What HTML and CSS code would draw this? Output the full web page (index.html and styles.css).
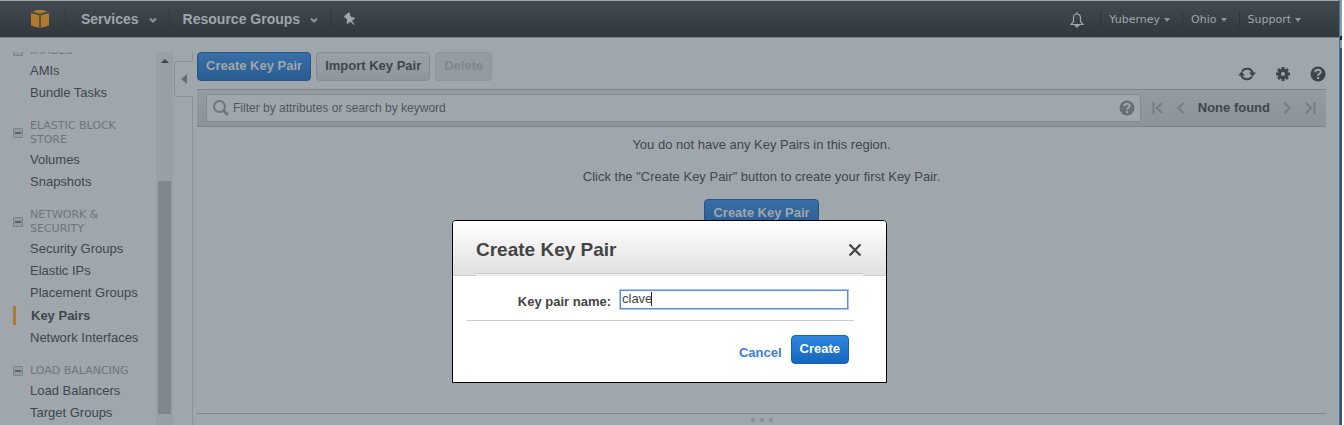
FILE: index.html
```html
<!DOCTYPE html>
<html lang="en">
<head>
<meta charset="utf-8">
<title>Key Pairs</title>
<link rel="stylesheet" href="styles.css">
</head>
<body>
<div class="window">
  <div class="app">
    <header class="topbar">
      <nav class="nav-main">
        <a class="logo" href="#" aria-label="Home">
          <svg width="20" height="20" viewBox="0 0 20 20" fill="#b27a30"><path d="M2.500 2.500 7 1h6l4.500 1.500L10 4.800z"/><path d="M1 4 9.300 6.200V19L1 16.500z"/><path d="M19 4 10.700 6.200V19l8.300-2.500z"/></svg>
        </a>
        <button class="nav-item services" type="button">Services<svg class="chev" width="8" height="6" viewBox="0 0 8 6"><path d="M1 1.500 4 4.500 7 1.500"/></svg></button>
        <button class="nav-item groups" type="button">Resource Groups<svg class="chev" width="8" height="6" viewBox="0 0 8 6"><path d="M1 1.500 4 4.500 7 1.500"/></svg></button>
        <button class="nav-item pin" type="button" aria-label="Pin">
          <svg width="12" height="14" viewBox="0 0 12 14" fill="#a0a6ab"><path d="M3.500 1.200 5.200.500 6 1.500 5.800 3l2 2.500L10 5.300l1 1.200-3 2.200L10.500 12.500 9.800 13 6.500 9.700 3.200 12l-.700-1.200.800-2.100L2 6 .500 5.500 0 4.200z"/></svg>
        </button>
      </nav>
      <nav class="nav-user">
        <button class="user-item bell" type="button" aria-label="Alerts">
          <svg width="14" height="16" viewBox="0 0 14 16" fill="none" stroke="#a0a6ab" stroke-width="1.200"><path d="M7 0v2M1 12.500h12L10.500 9.500V6C10.500 3.500 9 2 7 2S3.500 3.500 3.500 6v3.500z"/><path d="M5.500 13.500h3L7 15z" fill="#a0a6ab"/></svg>
        </button>
        <button class="user-item" type="button">Yuberney<i class="caret"></i></button>
        <button class="user-item" type="button">Ohio<i class="caret"></i></button>
        <button class="user-item" type="button">Support<i class="caret"></i></button>
      </nav>
    </header>

    <div class="body">
      <aside class="sidebar">
        <nav class="menu">
          <section class="group">
            <h2><button class="fold" type="button" aria-label="Collapse"></button><span>IMAGES</span></h2>
            <a href="#">AMIs</a>
            <a href="#">Bundle Tasks</a>
          </section>
          <section class="group">
            <h2><button class="fold" type="button" aria-label="Collapse"></button><span>ELASTIC BLOCK STORE</span></h2>
            <a href="#">Volumes</a>
            <a href="#">Snapshots</a>
          </section>
          <section class="group">
            <h2><button class="fold" type="button" aria-label="Collapse"></button><span>NETWORK &amp; SECURITY</span></h2>
            <a href="#">Security Groups</a>
            <a href="#">Elastic IPs</a>
            <a href="#">Placement Groups</a>
            <a href="#" class="current">Key Pairs</a>
            <a href="#">Network Interfaces</a>
          </section>
          <section class="group">
            <h2><button class="fold" type="button" aria-label="Collapse"></button><span>LOAD BALANCING</span></h2>
            <a href="#">Load Balancers</a>
            <a href="#">Target Groups</a>
          </section>
        </nav>
        <div class="scrollbar"><i class="arrow"></i><div class="thumb"></div></div>
        <div class="divider"><button class="collapse" type="button" aria-label="Collapse panel"><i></i></button></div>
      </aside>

      <main class="content">
        <div class="toolbar">
          <button class="btn primary" type="button">Create Key Pair</button>
          <button class="btn plain" type="button">Import Key Pair</button>
          <button class="btn plain" type="button" disabled>Delete</button>
          <div class="tools">
            <button type="button" aria-label="Refresh"><svg width="18" height="16" viewBox="0 0 18 16"><path d="M4 5.500A6 6 0 0 1 14.800 7M14 10.500A6 6 0 0 1 3.200 9" fill="none" stroke="#3d454c" stroke-width="2"/><path d="M11 6.500h7L14.500 10.500zM0 9.500h7L3.500 5.500z" fill="#3d454c"/></svg></button>
            <button type="button" aria-label="Settings"><svg width="14" height="14" viewBox="0 0 14 14"><g stroke="#3d454c" stroke-width="3"><path d="M7 0v14M0 7h14M2.100 2.100l9.800 9.800M11.900 2.100 2.100 11.900"/></g><circle cx="7" cy="7" r="5" fill="#3d454c"/><circle cx="7" cy="7" r="2" fill="#9fa6ac"/></svg></button>
            <button type="button" aria-label="Help"><svg width="16" height="16" viewBox="0 0 16 16"><circle cx="8" cy="8" r="7.500" fill="#3d454c"/><path d="M5.300 6.200C5.300 3 10.700 3 10.700 6c0 1.800-2.700 1.800-2.700 3.800M8 11v2" fill="none" stroke="#9fa6ac" stroke-width="2"/></svg></button>
          </div>
        </div>
        <div class="filterbar">
          <div class="search">
            <svg width="16" height="16" viewBox="0 0 16 16" fill="none" stroke="#6e767c"><circle cx="6.500" cy="6.500" r="5.500" stroke-width="2"/><path d="m10.500 10.500 4.500 4.500" stroke-width="3"/></svg>
            <input type="text" aria-label="Filter" placeholder="Filter by attributes or search by keyword">
            <svg width="16" height="16" viewBox="0 0 16 16"><circle cx="8" cy="8" r="7.500" fill="#686f75"/><path d="M5.300 6.200C5.300 3 10.700 3 10.700 6c0 1.800-2.700 1.800-2.700 3.800M8 11v2" fill="none" stroke="#9fa6ac" stroke-width="2"/></svg>
          </div>
          <div class="pager">
            <button type="button" aria-label="First"><svg width="12" height="12" viewBox="0 0 12 12"><path d="M1.500 0v12M10 1 5 6l5 5"/></svg></button>
            <button type="button" aria-label="Previous"><svg width="8" height="12" viewBox="0 0 8 12"><path d="M6.500 1l-5 5 5 5"/></svg></button>
            <strong>None found</strong>
            <button type="button" aria-label="Next"><svg width="8" height="12" viewBox="0 0 8 12"><path d="M1.500 1l5 5-5 5"/></svg></button>
            <button type="button" aria-label="Last"><svg width="12" height="12" viewBox="0 0 12 12"><path d="M10.500 0v12M2 1l5 5-5 5"/></svg></button>
          </div>
        </div>
        <div class="empty">
          <p>You do not have any Key Pairs in this region.</p>
          <p>Click the "Create Key Pair" button to create your first Key Pair.</p>
          <button class="btn primary" type="button">Create Key Pair</button>
        </div>
        <div class="splitter"><i></i><i></i><i></i></div>
      </main>
    </div>
  </div>
  <div class="edge"></div>
</div>

<form class="dialog" role="dialog" aria-labelledby="dialog-title">
  <header class="dialog-head">
    <h1 id="dialog-title">Create Key Pair</h1>
    <button class="close" type="button" aria-label="Close"><svg width="14" height="14" viewBox="0 0 14 14"><path d="m1.500 1.500 11 11M12.500 1.500l-11 11" stroke="#444" stroke-width="2.200"/></svg></button>
  </header>
  <div class="field">
    <label for="key-name">Key pair name:</label>
    <div class="entry"><input id="key-name" type="text" value="clave"></div>
  </div>
  <div class="actions">
    <a href="#">Cancel</a>
    <button class="btn create" type="button">Create</button>
  </div>
</form>
</body>
</html>
```
FILE: styles.css
```css
* { box-sizing: border-box; }
body {
  margin: 0;
  font: 13px/16px "Liberation Sans", Arial, sans-serif;
  color: #3f474d;
  background: #fff;
  overflow: hidden;
}
button { font: inherit; color: inherit; background: none; border: 0; padding: 0; }
a { color: inherit; text-decoration: none; }
svg { display: block; }

.window { display: flex; height: 100vh; }
.app { flex: 1; min-width: 0; display: flex; flex-direction: column; background: #9fa6ac; }
.edge {
  width: 5px;
  border-left: 1px solid #2f78b5;
  border-right: 2px solid #fff;
  background: linear-gradient(#999 36px, #222 36px, #222 40px, #999 40px, #999 48px, #484d51 48px);
}

/* Top navigation */
.topbar {
  display: flex;
  justify-content: space-between;
  height: 38px;
  padding: 0 24px 0 30px;
  border-top: 1px solid #a0a6ab;
  border-bottom: 1px solid #7c848b;
  background: linear-gradient(#434b51, #30373d);
  color: #a0a6ab;
}
.nav-main, .nav-user { display: flex; align-items: center; }
.nav-user { padding-top: 2px; }
.logo { padding-right: 15px; }
.nav-item, .user-item {
  display: flex;
  align-items: center;
  height: 18px;
  border-left: 1px solid #2e353a;
}
.nav-item { padding: 0 12px 0 15px; font-size: 14px; font-weight: bold; gap: 10px; }
.groups { padding-left: 13px; }
.pin { padding-left: 13px; }
.chev { fill: none; stroke: #8f969b; stroke-width: 2; margin-top: 2px; }
.user-item { padding: 0 12px 0 8px; gap: 4px; font: 11px/16px "DejaVu Sans", Verdana, sans-serif; }
.user-item:last-child { padding-right: 14px; }
.bell { border: 0; padding-right: 16px; }
.caret { border: 3px solid transparent; border-top: 4px solid #8f969b; border-bottom: 0; }

.body { flex: 1; min-height: 0; display: flex; padding-top: 14px; }

/* Sidebar */
.sidebar { display: flex; width: 193px; flex: none; }
.menu { flex: 1; min-width: 0; overflow: hidden; display: flex; flex-direction: column; justify-content: flex-end; padding: 0 0 1px 13px; }
.group { margin-top: 15px; flex: none; }
.group h2 {
  display: flex;
  align-items: center;
  gap: 7px;
  margin: 0 0 2px;
  font: 11px/14px "DejaVu Sans", Verdana, sans-serif;
  color: #6e767d;
}
.group h2 span { width: 110px; }
.fold { width: 10px; height: 10px; border: 1px solid #7b8389; border-radius: 1px; display: grid; place-items: center; background: #949ba1; }
.fold::before { content: ""; width: 6px; height: 2px; background: #596167; }
.group a { display: block; padding-left: 17px; line-height: 22px; }
.group .current { margin: 2px 0; padding-left: 15px; border-left: 3px solid #b27a30; line-height: 19px; font-weight: bold; }
.scrollbar { width: 17px; flex: none; display: flex; flex-direction: column; align-items: center; background: #989fa5; padding: 7px 0 11px; }
.arrow { border: 4px solid transparent; border-top: 0; border-bottom-color: #3d454c; }
.thumb { width: 13px; flex: 1; margin-top: 118px; background: #7f878d; }
.divider { width: 20px; flex: none; padding: 9px 0 0 1px; border-right: 1px solid #8a9298; }
.collapse {
  display: grid;
  place-items: center;
  width: 19px;
  height: 36px;
  border: 1px solid #8a9298;
  border-right-color: #9fa6ac;
  border-radius: 3px 0 0 3px;
  background: #9fa6ac;
}
.collapse i { border: 5px solid transparent; border-left: 0; border-right: 6px solid #666e74; }

/* Content */
.content { flex: 1; min-width: 0; display: flex; flex-direction: column; padding: 0 13px 0 4px; }
.toolbar { display: flex; align-items: flex-start; gap: 5px; height: 37px; }
.btn {
  height: 29px;
  padding: 0 8px 1px;
  border: 1px solid #858d93;
  border-radius: 4px;
  font-weight: bold;
  white-space: nowrap;
}
.primary { color: #a0a6ab; border-color: #235487; background: linear-gradient(#396ea6, #295d92); }
.plain { background: linear-gradient(#9ba2a7, #8f979d); }
.plain:disabled { color: #7f878d; border-color: #8e969c; background: #949ba1; }
.tools { display: flex; align-items: center; gap: 20px; margin-left: auto; padding-top: 14px; }
.filterbar {
  display: flex;
  align-items: center;
  height: 38px;
  padding: 0 10px 0 9px;
  gap: 11px;
  border: 1px solid #7d858b;
  border-width: 1px 0;
  background: linear-gradient(#949ba1, #8c949a);
}
.search {
  display: flex;
  align-items: center;
  gap: 4px;
  flex: 1;
  height: 28px;
  padding: 0 5px 0 6px;
  border: 1px solid #848c92;
  border-radius: 3px;
  background: #9fa6ac;
}
.search input { flex: 1; min-width: 0; border: 0; padding: 0; background: none; font: 12px/16px "Liberation Sans", Arial, sans-serif; }
.search input::placeholder { color: #50585e; opacity: 1; }
.pager { display: flex; align-items: center; gap: 13px; }
.pager svg { fill: none; stroke: #757d83; stroke-width: 2; }
.empty { display: flex; flex-direction: column; align-items: center; padding-top: 10px; }
.empty p { margin: 0 0 16px; }
.empty .btn { margin-top: -2px; }
.splitter { display: flex; justify-content: center; gap: 5px; height: 12px; margin-top: auto; padding-top: 4px; border-top: 1px solid #7f878d; }
.splitter i { width: 4px; height: 4px; background: #8a9298; border-radius: 1px; }

/* Dialog */
.dialog {
  position: absolute;
  top: 220px;
  left: 50%;
  width: 435px;
  margin-left: -220px;
  border: 1px solid #000;
  border-radius: 4px 4px 0 0;
  background: #fff;
  color: #444;
}
.dialog-head {
  position: relative;
  display: flex;
  align-items: center;
  justify-content: space-between;
  height: 55px;
  padding: 3px 24px 0 23px;
  border-bottom: 1px solid #ccc;
  border-radius: 3px 3px 0 0;
  background: linear-gradient(#fff, #e0e0e0);
}
.dialog-head::after {
  content: "";
  position: absolute;
  inset: auto 23px -1px;
  height: 2px;
  border-top: 1px solid #ccc;
  background: #eee;
}
.dialog h1 { margin: 0; font-size: 19px; line-height: 24px; }
.field {
  display: flex;
  align-items: center;
  justify-content: flex-end;
  gap: 8px;
  height: 45px;
  margin: 0 32px 0 14px;
  padding: 3px 5px 0 0;
  border-bottom: 1px solid #ccc;
}
.field label { font-weight: bold; padding-top: 5px; }
.entry { position: relative; display: flex; }
.entry::after { content: ""; position: absolute; left: 32px; top: 3px; width: 1px; height: 14px; background: #222; }
.field input {
  width: 230px;
  height: 21px;
  padding: 0 2px 3px;
  border: 1px solid #a9c6f3;
  outline: 1px solid #5a8bdc;
  outline-offset: -2px;
  font: 13px/16px "Liberation Sans", Arial, sans-serif;
  color: #444;
}
.actions { display: flex; align-items: center; justify-content: flex-end; gap: 9px; padding: 14px 37px 18px 0; }
.actions a { color: #3b7ddd; font-weight: bold; padding-top: 6px; }
.create { color: #fff; border-color: #1862b4; background: linear-gradient(#2f86de, #1467bd); }
```
